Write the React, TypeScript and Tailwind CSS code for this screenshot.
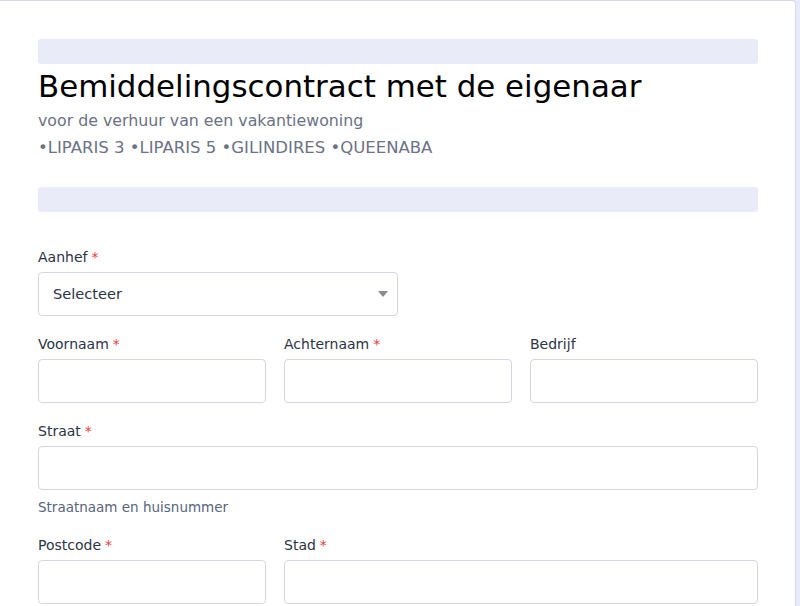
import React from "react";

const Req = () => <span className="text-[#f23a3c] ml-[4px]">*</span>;

interface FieldProps {
  label: string;
  required?: boolean;
  className?: string;
}

const Field = ({ label, required, className }: FieldProps) => (
  <div className={className}>
    <label className="block text-[14px] leading-[20px] text-[#2c3345]">
      {label}
      {required && <Req />}
    </label>
    <input
      type="text"
      className="mt-[5px] block w-full h-[44px] rounded-[4px] border border-[#d3d6e6] bg-white px-3 outline-none"
    />
  </div>
);

export default function App() {
  return (
    <div
      className="w-[800px] h-[606px] overflow-hidden bg-[#e9ebf8]"
      style={{ fontFamily: "'DejaVu Sans', Inter, sans-serif" }}
    >
      <div className="w-[796px] h-[620px] bg-white border-t border-r border-[#d6d9ef] rounded-tr-[4px] pt-[38px] pl-[38px] pr-[37px]">
        {/* header */}
        <div className="h-[25px] rounded-[3px] bg-[#e9ebf8]" />
        <h1 className="mt-[4px] text-[30.9px] leading-[36px] text-black">
          Bemiddelingscontract met de eigenaar
        </h1>
        <p className="mt-[6px] text-[15.8px] leading-[22px] text-[#6c7184]">
          voor de verhuur van een vakantiewoning
        </p>
        <p className="mt-[3px] text-[16.5px] leading-[26px] text-[#6c7184]">
          •LIPARIS 3 •LIPARIS 5 •GILINDIRES •QUEENABA
        </p>
        <div className="mt-[26px] h-[25px] rounded-[3px] bg-[#e9ebf8]" />

        {/* Aanhef */}
        <div className="mt-[35px] w-[360px]">
          <label className="block text-[14px] leading-[20px] text-[#2c3345]">
            Aanhef
            <Req />
          </label>
          <div className="mt-[5px] h-[44px] rounded-[4px] border border-[#d3d6e6] flex items-center justify-between pl-[14px] pr-[9px]">
            <span className="text-[14.6px] text-[#2c3345]">Selecteer</span>
            <svg width="10" height="6" viewBox="0 0 10 6">
              <path d="M0 0h10L5 6z" fill="#8c8c8c" />
            </svg>
          </div>
        </div>

        {/* naam */}
        <div className="mt-[18px] grid grid-cols-3 gap-[18px]">
          <Field label="Voornaam" required />
          <Field label="Achternaam" required />
          <Field label="Bedrijf" />
        </div>

        {/* straat */}
        <div className="mt-[18px]">
          <Field label="Straat" required />
          <p className="mt-[8px] text-[13.5px] leading-[18px] text-[#57647e]">
            Straatnaam en huisnummer
          </p>
        </div>

        {/* postcode / stad */}
        <div className="mt-[19px] flex gap-[18px]">
          <Field label="Postcode" required className="w-[228px]" />
          <Field label="Stad" required className="flex-1" />
        </div>
      </div>
    </div>
  );
}
